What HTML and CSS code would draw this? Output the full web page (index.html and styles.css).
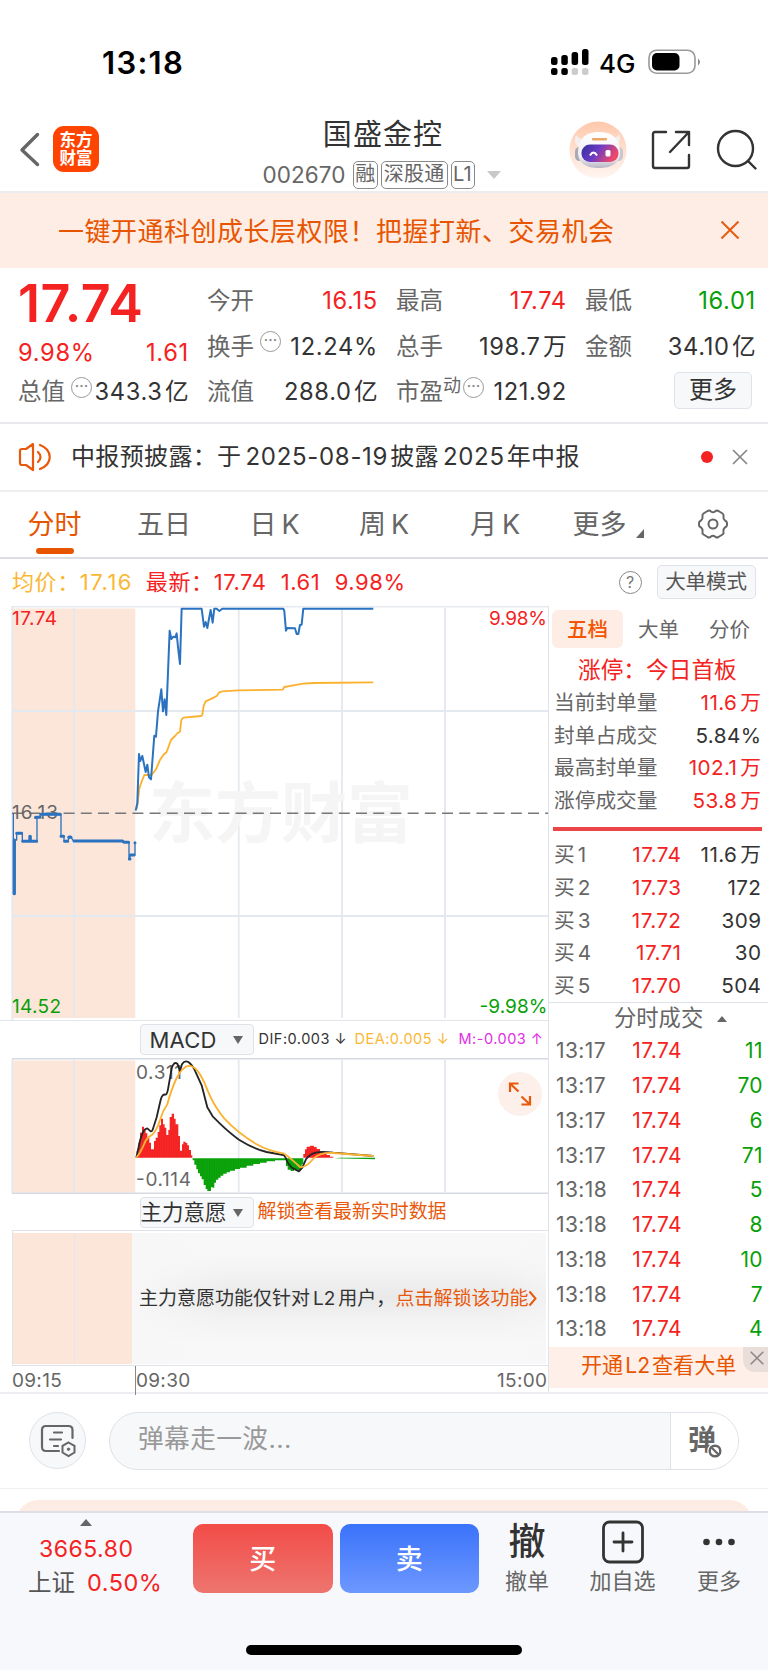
FILE: index.html
```html
<!DOCTYPE html>
<html lang="zh-CN">
<head>
<meta charset="utf-8">
<title>国盛金控 002670</title>
<link rel="stylesheet" href="styles.css">
</head>
<body>
<div class="phone">
  <div class="status">
    <span class="clock">13:18</span>
    <svg class="signal" width="38" height="28" viewBox="0 0 38 28">
      <rect x="0" y="9" width="6.5" height="8" rx="2.5"/><rect x="10.300" y="7" width="6.500" height="10" rx="2.500"/><rect x="20.600" y="4" width="6.500" height="13" rx="2.500"/><rect x="31" y="1" width="6.500" height="16" rx="2.500"/>
      <rect x="0" y="20" width="6.500" height="7" rx="2.500"/><rect x="10.300" y="20" width="6.500" height="7" rx="2.500"/><rect x="20.600" y="20" width="6.500" height="7" rx="2.500" fill="#ccc"/><rect x="31" y="20" width="6.500" height="7" rx="2.500" fill="#ccc"/>
    </svg>
    <span class="net">4G</span>
    <svg class="battery" width="54" height="26" viewBox="0 0 54 26">
      <rect x="1" y="1.200" width="46" height="23" rx="7.500" fill="none" stroke="#999" stroke-width="1.600"/>
      <rect x="4" y="4" width="27.500" height="17.500" rx="5"/><path d="M50 9.500q4 3.500 0 7z" fill="#888"/>
    </svg>
  </div>

  <header class="nav">
    <svg class="back" width="22" height="36" viewBox="0 0 22 36"><path d="M18.500 2.500 3 18l15.500 14.500" fill="none" stroke="#666" stroke-width="3.400" stroke-linecap="round" stroke-linejoin="round"/></svg>
    <div class="logo"><span>东方</span><span>财富</span></div>
    <div class="title">
      <div class="name">国盛金控</div>
      <div class="code"><span class="num">002670</span><span class="tag">融</span><span class="tag">深股通</span><span class="tag">L1</span><i class="tri-down"></i></div>
    </div>
    <svg class="robot" width="58" height="58" viewBox="0 0 58 58">
      <defs>
        <linearGradient id="halo" x2="0" y2="1"><stop offset="0" stop-color="#ffc8ab"/><stop offset="1" stop-color="#fff6f2"/></linearGradient>
        <linearGradient id="visor" x1="0" x2="1" y2=".35"><stop offset="0" stop-color="#332f9c"/><stop offset=".5" stop-color="#6c3bc4"/><stop offset="1" stop-color="#ee4869"/></linearGradient>
        <linearGradient id="head" x2="0" y2="1"><stop offset="0" stop-color="#fff"/><stop offset=".7" stop-color="#efeff4"/><stop offset="1" stop-color="#b9b6c4"/></linearGradient>
      </defs>
      <circle cx="29" cy="29" r="28.500" fill="url(#halo)"/>
      <path d="M9 26Q4 21 7 14q4 6 12 3zM47 26q6-5 3-13-4 6-11 4z" fill="#f4efef"/>
      <rect x="6" y="26" width="9" height="14" rx="4.500" fill="#aaa9b4"/><rect x="45" y="26" width="9" height="14" rx="4.500" fill="#c9c7d0"/>
      <path d="M9 31C10 15 19 11 30 11s20 4 21 20c0 12-9 16-21 16S9 43 9 31z" fill="url(#head)"/>
      <rect x="23" y="17" width="15" height="2.500" rx="1" fill="#eca766"/>
      <rect x="12.500" y="23.500" width="37" height="17.500" rx="8.500" fill="url(#visor)"/>
      <path d="M21 34.500q3.500-6 7 0" fill="none" stroke="#fff" stroke-width="2"/><rect x="36.500" y="29" width="5" height="6.500" rx="1.500" fill="#fff"/>
    </svg>
    <svg class="share" width="40" height="40" viewBox="0 0 40 40" fill="none" stroke="#333" stroke-width="2.400" stroke-linecap="round" stroke-linejoin="round"><path d="M15 2H4Q2 2 2 4v32q0 2 2 2h32q2 0 2-2V25M25 2h13v13M38 2 19 22"/></svg>
    <svg class="search" width="42" height="42" viewBox="0 0 42 42" fill="none" stroke="#333" stroke-width="2.400" stroke-linecap="round"><circle cx="19.500" cy="19.500" r="17.500"/><path d="m32 32 7.500 7.500"/></svg>
  </header>

  <div class="banner"><span>一键开通科创成长层权限！把握打新、交易机会</span>
    <svg width="20" height="20" viewBox="0 0 20 20"><path d="m1.500 1.500 17 17m0-17-17 17" stroke="#e85a10" stroke-width="2"/></svg>
  </div>

  <section class="quote">
    <div class="price-col">
      <div class="price">17.74</div>
      <div class="cell up"><span>9.98%</span><span>1.61</span></div>
    </div>
    <div class="cell"><span class="lab">今开</span><span class="up">16.15</span></div>
    <div class="cell"><span class="lab">最高</span><span class="up">17.74</span></div>
    <div class="cell"><span class="lab">最低</span><span class="down">16.01</span></div>
    <div class="cell"><span class="lab">换手</span><i class="dots">···</i><span>12.24%</span></div>
    <div class="cell"><span class="lab">总手</span><span>198.7<b>万</b></span></div>
    <div class="cell"><span class="lab">金额</span><span>34.10<b>亿</b></span></div>
    <div class="cell"><span class="lab">总值</span><i class="dots">···</i><span>343.3<b>亿</b></span></div>
    <div class="cell"><span class="lab">流值</span><span>288.0<b>亿</b></span></div>
    <div class="cell"><span class="lab">市盈<small>动</small></span><i class="dots pe">···</i><span>121.92</span></div>
    <div class="cell end"><span class="more-btn">更多</span></div>
  </section>

  <div class="news">
    <svg width="34" height="30" viewBox="0 0 34 30" fill="none" stroke="#e8590c" stroke-width="2.200" stroke-linecap="round" stroke-linejoin="round"><path d="M15 2 8 7H4Q2 7 2 9v12q0 2 2 2h4l7 5zM20 10q5 5 0 10M22 3c13 5 13 19 0 24"/></svg>
    <span class="news-text">中报预披露：于<b>2025-08-19</b>披露<b>2025</b>年中报</span>
    <i class="red-dot"></i>
    <svg width="16" height="16" viewBox="0 0 16 16"><path d="m1 1 14 14m0-14L1 15" stroke="#888" stroke-width="1.700"/></svg>
  </div>

  <nav class="tabs">
    <span class="tab on">分时</span><span class="tab">五日</span><span class="tab">日<b>K</b></span><span class="tab">周<b>K</b></span><span class="tab">月<b>K</b></span><span class="tab">更多<i class="corner"></i></span>
    <svg width="32" height="32" viewBox="0 0 32 32" fill="none" stroke="#666" stroke-width="2"><path d="M10.500 3q2-1 3.500.5 2 1.500 4 0Q19.500 2 21.500 3l4 2.500q1.500 1 1 3-.5 2.500 1.500 4 2 1 2 2.500v2q0 1.500-2 2.500-2 1.500-1.500 4 .5 2-1 3l-4 2.500q-2 1-3.500-.5-2-1.500-4 0-1.500 1.500-3.500.5l-4-2.500q-1.500-1-1-3 .5-2.500-1.500-4-2-1-2-2.500v-2q0-1.500 2-2.500 2-1.500 1.500-4-.5-2 1-3z"/><circle cx="16" cy="16" r="4.500"/></svg>
  </nav>

  <div class="info">
    <span class="avg">均价：</span><span class="avg v1">17.16</span><span class="up">最新：</span><span class="up v2">17.74</span><span class="up v3">1.61</span><span class="up v4">9.98%</span>
    <i class="help">?</i><span class="mode">大单模式</span>
  </div>

  <main class="board">
    <div class="charts">
      <svg class="plot" width="548" height="414" viewBox="0 0 548 414">
        <path d="M12 .5h536" stroke="#e6e9ef" stroke-width="2"/>
        <rect x="12" y="2.500" width="123.300" height="409.500" fill="#fce6da"/>
        <g stroke="#e4e8ef" stroke-width="1.800"><path d="M12.300 0v415M74 2v410M238.700 2v410M342 2v410M445 2v410M12 105h536M12 310h536"/></g>
        <text class="mark" x="149" y="231" textLength="264">东方财富</text>
        <path d="M12 207.200h536" stroke="#777" stroke-width="1.500" stroke-dasharray="11 6.200"/>
        <text x="12" y="19" class="t-up" textLength="45">17.74</text>
        <text x="547" y="19" class="t-up" text-anchor="end" textLength="58">9.98%</text>
        <text x="12" y="213" class="t-mid" textLength="46">16.13</text>
        <text x="12" y="407" class="t-down" textLength="49">14.52</text>
        <text x="547.500" y="407" class="t-down" text-anchor="end" textLength="68">-9.98%</text>
        <g transform="translate(0 -6) scale(.3333)" fill="none" stroke-linejoin="round">
          <path stroke="#fbb12e" stroke-width="5.500" d="M409 628 413 610 418 565 425 545 433 525H455L468 508 480 480 490 465 500 456 513 420 525 408 533 399 540 395 544 360 550 353 603 348 607 345 611 318 617 304 635 296 650 288 658 277 667 274 715 271 848 269 853 261 880 256 910 251 940 249 1120 247"/>
          <path stroke="#2b73c0" stroke-width="6" d="M407 632 412 610 417 462 421 483 427 468 437 516 442 494 447 532 453 538 463 407 468 410 474 335 484 268 489 334 494 298 499 345 509 92 514 117 520 110 526 112 530 100 535 150 540 192 545 26H605L612 80 617 66 622 84 632 30 638 68 643 26H650L658 33 667 26H850L853 33 858 92 862 84 885 85 890 102H895L900 75 905 74 910 26H1120"/>
          <path stroke="#2b73c0" stroke-width="4" d="M40 640V883M45 883V720H50V700H67V724H88V708H93V724H111V652H120V644H183V709H192V724H203L210 708 220 722H368V727H387V778H390V765H405V727"/>
          <path stroke="#2b73c0" stroke-width="9" stroke-linecap="round" d="M43 720V881M50 700H65M68 724H110M90 709V720M107 652H120M123 643H181M183 709H191M194 724H203M206 712H213M222 723H368L372 727H386M388 777H390M391 765H402M405 728v.1"/>
        </g>
      </svg>
      <div class="tool">
        <span class="select">MACD<i></i></span><span class="legend dif">DIF:0.003 ↓</span><span class="legend dea">DEA:0.005 ↓</span><span class="legend m">M:-0.003 ↑</span>
      </div>
      <svg class="plot" width="548" height="136" viewBox="0 0 548 136">
        <defs><pattern id="bars" width="1.720" height="10" patternUnits="userSpaceOnUse"><path d="M0 0v10" stroke="#fff" stroke-width=".35" opacity=".6"/></pattern></defs>
        <rect x="12" y="2.500" width="123.300" height="132" fill="#fce6da"/>
        <path d="M12.300 1v134M74 2v132M238.700 2v132M342 2v132M445 2v132" stroke="#e4e8ef" stroke-width="1.800" fill="none"/>
        <path d="M12 .8h536M12 135.200h536" stroke="#d5d9e2" stroke-width="1.500"/>
        <text x="136" y="21" class="t-mid" textLength="46">0.311</text>
        <text x="136" y="128" class="t-mid" textLength="55">-0.114</text>
        <g transform="translate(0 -42) scale(.3333)">
          <path fill="#f52020" d="M410 425V405H415V380H420V350H426V332H432V342H437V352H442V364H448V380H453V400H462V375H467V365H473V348H478V328H483V308H489V325H494V335H499V357H505V342H509V303H515V293H522V308H527V325H535V360H540V404H546V385H550V377H557V381H562V388H567V402H573V418H577V425ZM910 425V414H915V400H920V392H930V389H942V393H950V399H960V405H970V411H980V417H990V422H1000V425Z"/>
          <path fill="#06a006" d="M578 427V433H583V446H589V460H594V472H600V481H605V490H611V507H617V519H622V525H633V514H638V515H643V500H648V491H655V485H662V479H670V473H680V469H690V464H705V459H720V455H740V449H760V444H780V440H800V436H825V433H858V450H863V461H872V465H882V461H893V465H900V458H905V445H910V427ZM1005 427L1125 430V425H1020Z"/>
          <g fill="none" stroke-width="5.500" stroke-linejoin="round">
            <path stroke="#222" d="M409 425 420 374 428 350Q433 338 442 337L452 346Q456 348 459 338L470 304 482 252Q487 233 497 236 501 235 504 220L515 157Q522 135 532 143L540 165 546 145Q554 132 565 138 578 147 586 166L605 208 622 274 638 301 660 323Q690 352 717 371 760 398 800 408L850 417Q857 421 862 438L875 455 897 466 907 455 918 430Q930 413 950 409 967 406 1000 410L1120 420"/>
            <path stroke="#fbb12e" d="M409 425Q422 410 436 376 444 362 457 356 470 344 481 310 488 285 502 265 514 220 530 186 548 151 568 149 586 152 600 175 614 198 624 226 642 270 674 309 714 352 770 385 805 405 853 413 873 427 900 453 918 456 942 426 965 408 1000 411L1120 420"/>
          </g>
        </g>
        <rect x="136" y="50" width="243" height="84" fill="url(#bars)" opacity=".35"/>
        <circle cx="520" cy="36" r="22" fill="#fdefe9"/>
        <path d="M510 34v-8.500h8.500M510 25.500l8.500 8M530 38v8.500h-8.500M530 46.500l-8.500-8" fill="none" stroke="#e8590c" stroke-width="2.200"/>
      </svg>
      <div class="tool second">
        <span class="select full">主力意愿<i></i></span><span class="unlock">解锁查看最新实时数据</span>
      </div>
      <div class="locked">
        <div class="pre"></div>
        <div class="lock-msg"><span>主力意愿功能仅针对<b>L2</b>用户，</span><span class="lock-link">点击解锁该功能</span><svg width="9" height="17" viewBox="0 0 9 17"><path d="m1.500 1.500 6 7-6 7" fill="none" stroke="#e8590c" stroke-width="2"/></svg></div>
      </div>
      <div class="axis"><span class="a1">09:15</span><span class="a2">09:30</span><span class="a3">15:00</span></div>
    </div>

    <aside class="depth">
      <div class="dtabs"><span class="on">五档</span><span>大单</span><span>分价</span></div>
      <div class="limit">涨停：今日首板</div>
      <div class="stats">
        <div><span>当前封单量</span><em class="up">11.6<b>万</b></em></div>
        <div><span>封单占成交</span><em>5.84%</em></div>
        <div><span>最高封单量</span><em class="up">102.1<b>万</b></em></div>
        <div><span>涨停成交量</span><em class="up">53.8<b>万</b></em></div>
      </div>
      <div class="redbar"></div>
      <div class="bids">
        <div><span>买<b>1</b></span><em class="up">17.74</em><em>11.6<b>万</b></em></div>
        <div><span>买<b>2</b></span><em class="up">17.73</em><em>172</em></div>
        <div><span>买<b>3</b></span><em class="up">17.72</em><em>309</em></div>
        <div><span>买<b>4</b></span><em class="up">17.71</em><em>30</em></div>
        <div><span>买<b>5</b></span><em class="up">17.70</em><em>504</em></div>
      </div>
      <div class="deal-head">分时成交<i></i></div>
      <div class="deals">
        <div><span>13:17</span><em class="up">17.74</em><em class="down">11</em></div>
        <div><span>13:17</span><em class="up">17.74</em><em class="down">70</em></div>
        <div><span>13:17</span><em class="up">17.74</em><em class="down">6</em></div>
        <div><span>13:17</span><em class="up">17.74</em><em class="down">71</em></div>
        <div><span>13:18</span><em class="up">17.74</em><em class="down">5</em></div>
        <div><span>13:18</span><em class="up">17.74</em><em class="down">8</em></div>
        <div><span>13:18</span><em class="up">17.74</em><em class="down">10</em></div>
        <div><span>13:18</span><em class="up">17.74</em><em class="down">7</em></div>
        <div><span>13:18</span><em class="up">17.74</em><em class="down">4</em></div>
      </div>
      <div class="ad"><span>开通<b>L2</b>查看大单</span><i class="ad-x"><svg width="14" height="14" viewBox="0 0 14 14"><path d="m.7.7 12.600 12.600m0-12.600L.7 13.300" stroke="#8b8583" stroke-width="1.500"/></svg></i></div>
    </aside>
  </main>

  <div class="chat">
    <div class="round"><svg width="36" height="34" viewBox="0 0 36 34" fill="none" stroke="#666" stroke-width="2.200" stroke-linecap="round"><path d="M32.500 14V6q0-4-4-4H6Q2 2 2 6v17q0 4 4 4h13M14 8.500h8M10 15.500h11M14 22h4"/><path d="m28.500 18.500 6 3.400v6.600l-6 3.500-6-3.500v-6.600z" stroke-width="2"/><circle cx="28.500" cy="25.200" r="1.200" fill="#666" stroke-width="1"/></svg></div>
    <div class="field"><span class="hint">弹幕走一波...</span><span class="dan"><span class="dan-word">弹</span><svg width="16" height="16" viewBox="-1 -1 16 16"><circle cx="7" cy="7" r="7.800" fill="#fff"/><circle cx="7" cy="7" r="5.300" fill="#fff" stroke="#666" stroke-width="2.500"/><path d="m3.500 3.500 7 7" stroke="#666" stroke-width="2.200"/></svg></span></div>
  </div>
  <div class="peek"><div></div></div>

  <footer class="bottom">
    <div class="index"><i></i><div class="up pts">3665.80</div><div class="idx-row"><span>上证</span><span class="up">0.50%</span></div></div>
    <div class="btn buy">买</div>
    <div class="btn sell">卖</div>
    <div class="act a-cancel"><div class="ico">撤</div><div>撤单</div></div>
    <div class="act a-add"><div class="ico"><svg width="44" height="44" viewBox="0 0 44 44" fill="none" stroke="#333" stroke-width="2.800" stroke-linecap="round"><rect x="2.500" y="2" width="39" height="40" rx="6"/><path d="M13 22h18M22 13v18"/></svg></div><div>加自选</div></div>
    <div class="act a-more"><div class="ico"><svg width="34" height="8" viewBox="0 0 34 8" fill="#333"><circle cx="4.500" cy="4" r="3.300"/><circle cx="17" cy="4" r="3.300"/><circle cx="29.500" cy="4" r="3.300"/></svg></div><div>更多</div></div>
  </footer>
  <div class="home"><div></div></div>
</div>
</body>
</html>
```

FILE: styles.css
```css
* { box-sizing: border-box; }
body { margin: 0; background: #fff; }
.phone { width: 768px; height: 1670px; overflow: hidden; font-family: Inter, "Noto Sans CJK SC", sans-serif; line-height: 1; color: #333; font-size: 22px; white-space: nowrap; }
i, em { font-style: normal; }
b { font-weight: 400; }
svg { display: block; flex: none; }
.up { color: #f52222; }
.down { color: #08a008; }

.status { height: 110px; display: flex; align-items: flex-start; padding-left: 102px; }
.clock { font-size: 31px; font-weight: 600; width: 449px; padding-top: 47px; color: #000; letter-spacing: 1.300px; }
.signal { margin-top: 48px; }
.net { font-size: 26px; font-weight: 500; color: #000; margin: 51px 0 0 10px; width: 49px; }
.battery { margin-top: 49px; }

.nav { height: 83px; border-bottom: 2px solid #ebecef; display: flex; align-items: flex-start; padding-left: 19px; }
.back { margin: 22px 12px 0 0; }
.logo { width: 46px; height: 46px; margin-top: 16px; border-radius: 11px; background: #ff4300; color: #fff; font-size: 16.500px; font-weight: 700; display: flex; flex-direction: column; align-items: center; justify-content: center; gap: 2px; }
.title { width: 268px; margin-left: 150px; display: flex; flex-direction: column; align-items: center; }
.name { font-size: 29px; letter-spacing: 1.100px; margin-top: 10px; }
.code { display: flex; align-items: center; color: #666; margin: 10px 0 0 -3px; height: 32px; gap: 3px; }
.num { font-size: 22.500px; margin-right: 4px; letter-spacing: .1px; }
.tag { border: 1.5px solid #8a8a8a; border-radius: 5px; height: 28px; font-size: 20px; line-height: 25px; padding: 0 2px 0 1.500px; }
.tag:nth-child(3) { letter-spacing: .3px; }
.tri-down { border: 7px solid transparent; border-top: 8px solid #c8c8c8; border-bottom: 0; margin-left: 9px; }
.robot { margin: 11px 0 0 52px; }
.share { margin: 20px 0 0 24px; }
.search { margin: 19px 0 0 25px; }

.banner { height: 75px; background: #feede4; color: #e85500; font-size: 26px; display: flex; align-items: center; justify-content: space-between; padding: 3px 28px 0 58px; letter-spacing: .5px; }
.banner svg { margin-top: -4px; }

.quote { height: 156px; padding: 10px 12px 0 18px; display: grid; grid-template-columns: repeat(4, 170px); grid-template-rows: repeat(3, 45.700px); column-gap: 19px; border-bottom: 2px solid #e7e9ed; font-size: 23.700px; letter-spacing: .65px; }
.price-col { grid-row: span 2; }
.price { color: #f52222; font-size: 52px; font-weight: 600; letter-spacing: .6px; margin-top: 0; }
.price-col .cell { margin-top: 0; height: 46px; }
.cell { display: flex; align-items: center; justify-content: space-between; }
.cell > span:last-child { margin-right: -.8px; }
.cell b { margin-left: 2.500px; letter-spacing: 0; }
em b { margin-left: 3px; }
.lab { color: #666; font-size: 23.500px; letter-spacing: 0; }
.lab small { font-size: 18px; position: relative; top: -8px; }
.dots { flex: none; width: 21px; height: 21px; border: 1.800px solid #999; border-radius: 50%; color: #888; font-size: 14px; line-height: 16px; font-weight: 600; letter-spacing: 0; text-align: center; margin: -10px auto 0 6px; }
.pe { margin-left: 2px; }
.end { justify-content: flex-end; }
.cell > .more-btn:last-child { width: 78px; height: 37px; margin: -3px 3px 0 0; border: 1.500px solid #dfe2e8; border-radius: 5px; background: #f7f8fa; text-align: center; line-height: 33px; font-size: 24px; letter-spacing: 0; }

.news { height: 68px; border-bottom: 2px solid #efeff1; display: flex; align-items: center; padding: 0 20px 0 18px; font-size: 24px; }
.news-text { margin-left: 19px; width: 631px; letter-spacing: .35px; }
.news-text b { margin: 0 2px 0 4px; letter-spacing: .7px; }
.red-dot { width: 12px; height: 12px; border-radius: 50%; background: #f52222; margin-right: 19px; }

.tabs { height: 67px; border-bottom: 2px solid #dddee5; display: grid; grid-template-columns: 109px 110px 111px 108px 114px 112px 32px; align-items: center; color: #666; font-size: 27px; }
.tab { text-align: center; height: 100%; line-height: 66px; position: relative; }
.tab b { margin-left: 5px; }
.tab.on { color: #e85500; }
.tab.on::after { content: ""; position: absolute; left: 36px; bottom: 4px; width: 38px; height: 6px; border-radius: 3px; background: #e85500; }
.tabs svg { margin: -2px 0 0 33px; }
.corner { display: inline-block; border-left: 8px solid transparent; border-bottom: 9px solid #666; margin: 0 0 -4px 9px; }

.info { height: 47px; display: flex; align-items: center; padding: 0 0 1px 12px; letter-spacing: .6px; }
.avg { color: #fbb733; }
.v1 { width: 66px; letter-spacing: 1.500px; }
.v2 { width: 67px; }
.v3 { width: 54px; }
.v4 { width: 284px; }
.info .help { width: 23px; height: 23px; border: 1.500px solid #888; border-radius: 50%; color: #777; font-size: 16px; line-height: 20px; text-align: center; margin-right: 15px; letter-spacing: 0; }
.mode { width: 99px; height: 34px; border: 1.500px solid #dfe2e8; border-radius: 5px; background: #f7f8fa; color: #555; font-size: 20.500px; line-height: 31px; text-align: center; letter-spacing: 0; }

.board { display: flex; height: 788px; border-bottom: 2px solid #eceef1; }
.charts { width: 548px; }
.plot text { font-size: 19px; }
.t-up { fill: #f52222; }
.t-down { fill: #08a008; }
.t-mid { fill: #666; }
.plot .mark { fill: #f5f5f6; font-size: 66px; font-weight: 700; }
.tool { height: 38px; border-top: 1.500px solid #e2e5ea; display: flex; align-items: center; padding-left: 139.500px; }
.select { width: 114px; height: 31px; background: #f7f8fa; border: 1.500px solid #dfe2e8; border-radius: 4px; display: flex; align-items: center; justify-content: space-between; padding: 0 10px 0 9px; font-size: 22px; letter-spacing: .2px; }
.select i { border: 5px solid transparent; border-top: 8px solid #666; border-bottom: 0; }
.full { padding-left: 0; font-size: 21.500px; letter-spacing: 0; }
.legend { font-size: 14.500px; letter-spacing: .5px; }
.dif { margin-left: 5px; width: 96px; }
.dea { color: #fbb733; width: 104px; }
.m { color: #e22ee2; }
.second { border: 0; height: 36px; padding-top: 1px; }
.unlock { color: #e8590c; margin-left: 4px; font-size: 18.900px; }
.locked { height: 136px; margin-left: 12px; border: solid #dfe2e8; border-width: 1.500px 0 1.500px 1px; display: flex; padding: 2px 2px 1px 0; }
.pre { width: 119px; background: linear-gradient(90deg, transparent 61px, #e4e6ec 61px, #e4e6ec 62.500px, transparent 62.500px) #fce6da; }
.lock-msg { flex: 1; display: flex; align-items: center; padding: 0 0 1px 7px; font-size: 19px; background: linear-gradient(90deg, #f7f7f7, transparent 22%, transparent 88%, #f7f7f799), linear-gradient(#f8f8f8 15%, #f2f2f2 32%, #e9e9e9 49%, #f2f2f2 65%, #f8f8f8 85%); }
.lock-msg b { margin: 0 3px; }
.lock-link { color: #e8590c; }
.axis { display: flex; height: 28px; align-items: center; color: #666; font-size: 19px; letter-spacing: .3px; }
.axis span { line-height: 29px; }
.a1 { margin-left: 12px; width: 123px; }
.a2 { border-left: 1.500px solid #888; width: 362px; }

.depth { width: 220px; border-left: 1.500px solid #e0e3e9; }
.dtabs { display: flex; padding: 4px 0 0 3px; color: #666; font-size: 20.500px; }
.dtabs span { width: 71px; height: 38px; line-height: 39px; text-align: center; border-radius: 6px; }
.dtabs .on { background: #feede4; color: #f45500; font-weight: 500; }
.limit { color: #f52222; font-size: 22.700px; margin: 11px 0 5px 29px; }
.stats { padding: 0 7px 0 5px; color: #666; font-size: 20.700px; }
.stats div { display: flex; height: 32.800px; align-items: center; justify-content: space-between; }
.stats em, .bids em { letter-spacing: .4px; margin-right: -.4px; }
.stats em, .bids em:last-child { color: #333; }
.stats em.up { color: #f52222; }
.redbar { height: 4px; margin: 9px 6px 8px 4px; background: #eb4548; }
.bids { padding: 0 7px 0 5px; color: #666; font-size: 20.700px; height: 163.500px; }
.bids div, .deals div { display: grid; grid-template-columns: 60px 67px 1fr; height: 32.800px; align-items: center; text-align: right; }
.bids span, .deals span { text-align: left; }
.bids span b { margin-left: 3px; }
.deal-head { border-top: 1.500px solid #dfe2e8; height: 31px; color: #666; font-size: 22.300px; padding: 4px 0 0 65px; display: flex; gap: 14px; }
.deal-head i { align-self: center; border: 5px solid transparent; border-bottom: 6px solid #666; border-top: 0; margin-top: -3px; }
.deals { padding: 0 5px 0 7px; color: #666; font-size: 21px; letter-spacing: .4px; height: 313.750px; }
.deals div { grid-template-columns: 50px 76px 1fr; height: 34.750px; }
.ad { height: 41px; background: #fef0e9; color: #e85500; display: flex; justify-content: space-between; font-size: 21.100px; line-height: 38px; padding-left: 32px; }
.ad b { margin: 0 2px; }
.ad-x { width: 25px; height: 25px; background: #e9deda; border-bottom-left-radius: 12px; padding: 4px 0 0 7px; }

.chat { height: 95px; border-bottom: 1.500px solid #f1f2f4; display: flex; padding: 18px 29px 0; }
.round { width: 57px; height: 57px; border-radius: 50%; border: 1.500px solid #dfe2e8; background: #f7f8fa; display: flex; align-items: center; justify-content: center; margin-right: 23px; }
.field { width: 630px; height: 58px; border: 1.500px solid #dfe2e8; border-radius: 29px; overflow: hidden; background: #f7f8fa; display: flex; justify-content: space-between; }
.hint { color: #999; font-size: 25.700px; padding: 13px 0 0 28px; letter-spacing: .4px; }
.dan { width: 68px; background: #fff; border-left: 1.500px solid #dfe2e8; padding: 13px 0 0 17px; position: relative; }
.dan-word { font-size: 28px; font-weight: 700; color: #666; }
.dan svg { position: absolute; left: 36px; top: 30px; }
.peek { height: 24px; padding: 11px 15px 0; border-bottom: 2px solid #dedfe6; overflow: hidden; }
.peek div { height: 60px; border-radius: 24px; background: #fdece3; }

.bottom { height: 120px; background: #f7f8fb; display: flex; align-items: flex-start; padding-left: 18px; }
.index { width: 175px; display: flex; flex-direction: column; font-size: 23px; padding-left: 10px; }
.index > i { border: 6.500px solid transparent; border-bottom: 7px solid #666; border-top: 0; margin: 6px 0 0 52px; width: 0; }
.pts { margin: 12px 0 10px 11px; letter-spacing: .5px; }
.idx-row { display: flex; gap: 12px; color: #555; font-size: 23.500px; }
.idx-row .up { letter-spacing: .5px; }
.btn { width: 139.500px; height: 69px; margin: 11px 7px 0 0; border-radius: 10px; color: #fff; font-size: 27px; font-weight: 500; text-align: center; line-height: 72px; }
.buy { background: linear-gradient(#f24c48, #ee756f); }
.sell { background: linear-gradient(#3a72f9, #6d98ff); }
.act { text-align: center; color: #666; font-size: 22px; }
.ico { height: 57px; display: flex; align-items: center; justify-content: center; font-size: 37px; font-weight: 500; color: #333; }
.a-cancel { width: 82px; }
.a-add { width: 109px; }
.a-more { width: 84px; }
.home { height: 40px; background: #f7f8fb; display: flex; justify-content: center; padding-top: 12px; }
.home div { width: 276px; height: 10px; border-radius: 5px; background: #000; }
```
